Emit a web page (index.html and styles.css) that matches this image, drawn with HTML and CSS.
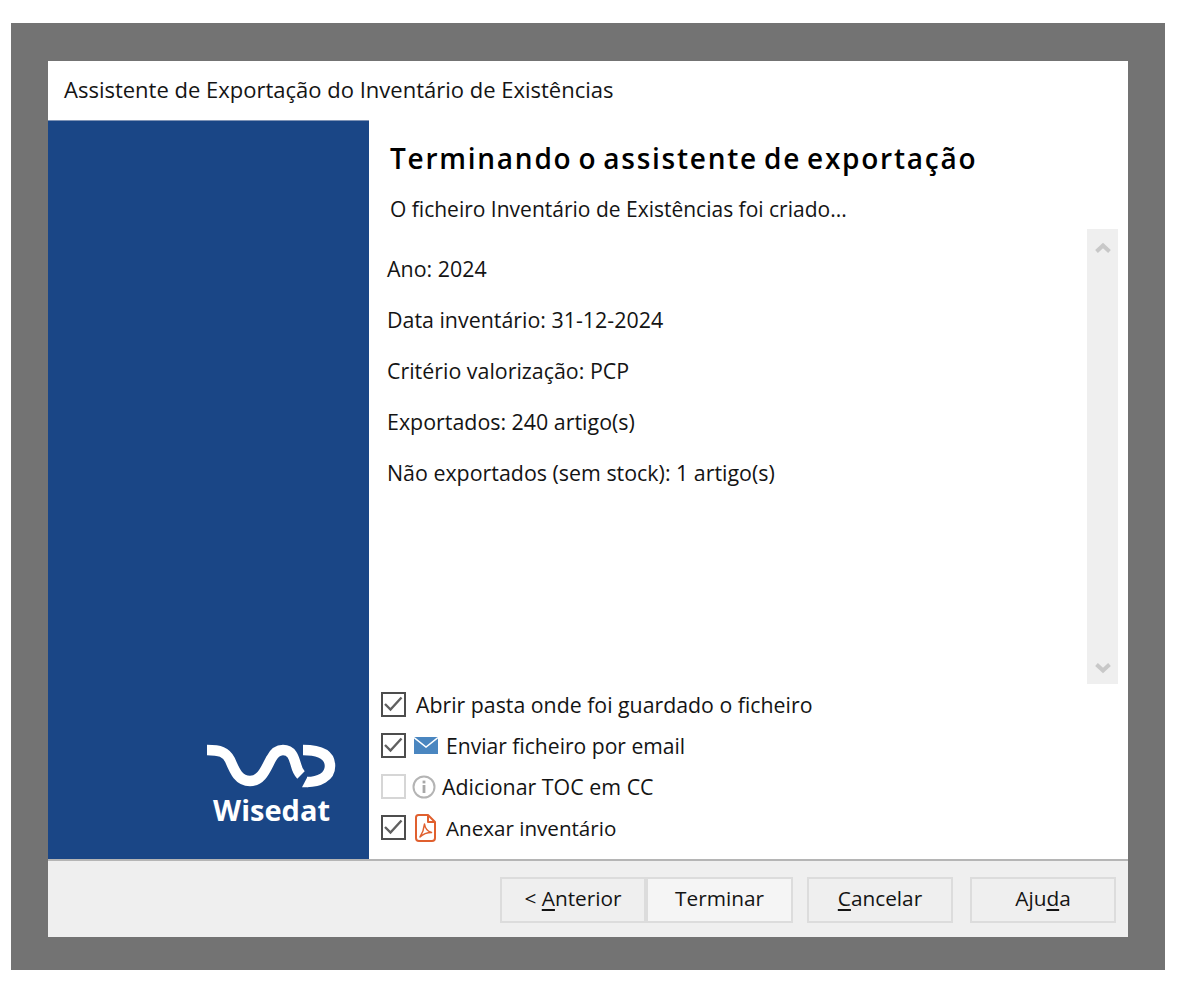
FILE: index.html
```html
<!DOCTYPE html>
<html lang="pt">
<head>
<meta charset="utf-8">
<title>Assistente de Exportação</title>
<link rel="stylesheet" href="styles.css">
</head>
<body>
<div class="frame">
  <div class="window">
    <header class="titlebar">Assistente de Exportação do Inventário de Existências</header>
    <div class="main">
      <aside class="side">
        <div class="logo">
          <svg class="logo-mark" width="130" height="46" viewBox="0 0 130 46">
            <path class="logo-stroke" d="M1 6 C14 6 20 8 24 16 C29 28 33 37 44 37 C56 37 60 24 65 15 C68 9 72 6 77 6 C86 6 88 14 90 21 C91 25 93 29 95 31"/>
            <path class="logo-stroke" d="M97 6 C113 6 124 10 124 22 C124 33 113 38 101 38"/>
            <path class="logo-tip" d="M101.5 32.7 V43.3 H96 Z"/>
          </svg>
          <div class="logo-name">Wisedat</div>
        </div>
      </aside>
      <section class="content">
        <h1 class="heading">Terminando o assistente de exportação</h1>
        <p class="subtitle">O ficheiro Inventário de Existências foi criado...</p>
        <div class="log">
          <div class="log-lines">
            <p>Ano: 2024</p>
            <p>Data inventário: 31-12-2024</p>
            <p>Critério valorização: PCP</p>
            <p>Exportados: 240 artigo(s)</p>
            <p>Não exportados (sem stock): 1 artigo(s)</p>
          </div>
          <div class="scrollbar">
            <svg width="16" height="12" viewBox="0 0 16 12"><path class="arrow" d="M1.5 9.5 L8 3.5 L14.5 9.5"/></svg>
            <svg width="16" height="12" viewBox="0 0 16 12"><path class="arrow" d="M1.5 2.5 L8 8.5 L14.5 2.5"/></svg>
          </div>
        </div>
        <div class="options">
          <div class="option">
            <span class="check"><svg width="21" height="21" viewBox="0 0 21 21"><path class="tick" d="M2 10 L7.5 15.5 L18.5 3.5"/></svg></span>
            <span class="opt-label first">Abrir pasta onde foi guardado o ficheiro</span>
          </div>
          <div class="option">
            <span class="check"><svg width="21" height="21" viewBox="0 0 21 21"><path class="tick" d="M2 10 L7.5 15.5 L18.5 3.5"/></svg></span>
            <svg class="opt-icon mail" width="24" height="17" viewBox="0 0 24 17"><rect width="24" height="17" fill="#4a86c0"/><path fill="none" stroke="#fff" stroke-width="1.4" d="M0 0.5 L12 10 L24 0.5"/></svg>
            <span class="opt-label email">Enviar ficheiro por email</span>
          </div>
          <div class="option">
            <span class="check off"></span>
            <svg class="opt-icon info" width="24" height="24" viewBox="0 0 24 24"><circle cx="12" cy="12" r="10.5" fill="none" stroke="#b4b4b4" stroke-width="2"/><rect x="10.6" y="10" width="2.8" height="8" fill="#a8a8a8"/><rect x="10.6" y="5.6" width="2.8" height="2.8" fill="#a8a8a8"/></svg>
            <span class="opt-label near">Adicionar TOC em CC</span>
          </div>
          <div class="option">
            <span class="check"><svg width="21" height="21" viewBox="0 0 21 21"><path class="tick" d="M2 10 L7.5 15.5 L18.5 3.5"/></svg></span>
            <svg class="opt-icon pdf" width="21" height="28" viewBox="0 0 21 28"><path fill="none" stroke="#e0602f" stroke-width="2" stroke-linejoin="round" d="M3.5 1 H13 L20 8 V24 Q20 27 17 27 H4 Q1 27 1 24 V3.5 Q1 1 3.5 1 Z M13 1 V8 H20"/><path fill="none" stroke="#e0602f" stroke-width="1.5" stroke-linejoin="round" d="M9.5 10 C10 14 12 17 16.5 18.5 C12 18.5 8 20 5 23 C7.5 19 9 15 9.5 10 Z"/></svg>
            <span class="opt-label attach">Anexar inventário</span>
          </div>
        </div>
      </section>
    </div>
    <footer class="footer">
      <div class="btn-pair">
        <button class="btn" type="button">&lt; <u>A</u>nterior</button>
        <button class="btn primary" type="button">Terminar</button>
      </div>
      <button class="btn" type="button"><u>C</u>ancelar</button>
      <button class="btn last" type="button">Aju<u>d</u>a</button>
    </footer>
  </div>
</div>
</body>
</html>
```

FILE: styles.css
```css
* { box-sizing: border-box; }
html, body { margin: 0; padding: 0; background: #fff; }
body {
  width: 1180px;
  height: 984px;
  padding: 23px 15px 14px 11px;
  font-family: "Open Sans", "Noto Sans", sans-serif;
  font-size: 21px;
  color: #141414;
}
.frame {
  width: 1154px;
  height: 947px;
  background: #737373;
  padding: 38px 37px 33px 37px;
}
.window {
  width: 1080px;
  height: 876px;
  background: #fff;
  display: flex;
  flex-direction: column;
}
.titlebar {
  flex: none;
  height: 59px;
  padding: 13px 0 0 16px;
  font-size: 22px;
  line-height: 30px;
  white-space: nowrap;
}
.main { flex: 1; display: flex; min-height: 0; }
.side {
  flex: none;
  width: 321px;
  background: #1a4686;
  border-top: 1px solid #7f93b5;
  display: flex;
  flex-direction: column;
  justify-content: flex-end;
  align-items: flex-end;
  padding: 0 33px 33px 0;
}
.logo { display: flex; flex-direction: column; align-items: flex-end; }
.logo-mark { display: block; }
.logo-stroke { fill: none; stroke: #fff; stroke-width: 10.5; }
.logo-tip { fill: #fff; }
.logo-name {
  color: #fff;
  font-weight: 700;
  font-size: 29px;
  line-height: 32px;
  margin: 4px 6px 0 0;
}
.content {
  flex: 1;
  display: flex;
  flex-direction: column;
  min-width: 0;
  padding: 0 10px 0 12px;
}
.heading {
  flex: none;
  margin: 19px 0 0 9px;
  font-size: 28px;
  line-height: 38px;
  font-weight: 600;
  color: #000;
  letter-spacing: 1.75px;
  word-spacing: -3px;
  white-space: nowrap;
}
.subtitle {
  flex: none;
  margin: 18px 0 0 9px;
  line-height: 28px;
  white-space: nowrap;
}
.log {
  flex: none;
  display: flex;
  height: 455px;
  margin-top: 6px;
  justify-content: space-between;
}
.log-lines { padding: 25px 0 0 6px; font-size: 21.4px; }
.log-lines p {
  margin: 0 0 21px;
  line-height: 30px;
  white-space: nowrap;
}
.scrollbar {
  width: 31px;
  background: #efefef;
  display: flex;
  flex-direction: column;
  justify-content: space-between;
  align-items: center;
  padding: 13px 0 10px;
}
.arrow { fill: none; stroke: #c8c8c8; stroke-width: 4; }
.options { flex: none; display: flex; flex-direction: column; }
.option {
  display: flex;
  align-items: center;
  height: 41px;
}
.check {
  width: 25px;
  height: 25px;
  border: 2px solid #4d4d4d;
  background: #fff;
  display: flex;
  align-items: center;
  justify-content: center;
  flex: none;
}
.check.off { border-color: #d6d6d6; }
.tick { fill: none; stroke: #606060; stroke-width: 2.4; }
.opt-icon { flex: none; }
.opt-icon.mail { margin-left: 8px; }
.opt-icon.info { margin-left: 6px; }
.opt-icon.pdf { margin-left: 9px; }
.opt-label { margin-left: 9px; font-size: 21.3px; white-space: nowrap; line-height: 30px; }
.opt-label.first { margin-left: 10px; }
.opt-label.email { margin-left: 8px; font-size: 21.1px; }
.opt-label.near { margin-left: 6px; font-size: 21.4px; }
.opt-label.attach { margin-left: 10px; font-size: 20.6px; }
.footer {
  flex: none;
  height: 78px;
  background: #efefef;
  border-top: 2px solid #b5b5b5;
  display: flex;
  justify-content: flex-end;
  gap: 14px;
  padding: 16px 12px 0 0;
}
.btn-pair { display: flex; }
.btn {
  width: 146px;
  height: 46px;
  background: #efefef;
  border: 2px solid #dcdcdc;
  font: inherit;
  font-size: 20.8px;
  color: #141414;
  padding: 0 0 5px;
}
.btn.primary { width: 147px; background: #f5f5f5; }
.btn.last { margin-left: 3px; }
.btn u { text-underline-offset: 3px; }
```
